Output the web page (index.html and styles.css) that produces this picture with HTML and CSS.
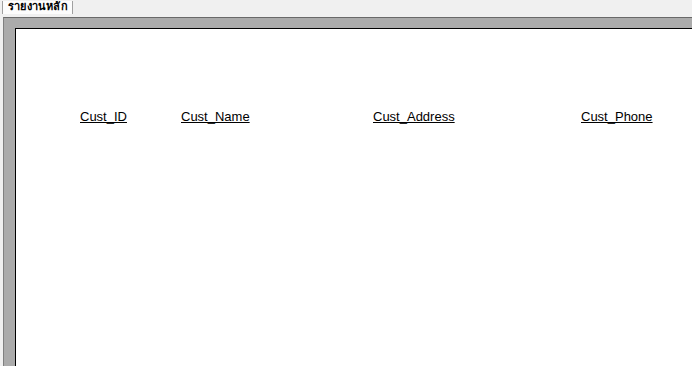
FILE: index.html
```html
<!DOCTYPE html>
<html lang="th">
<head>
    <meta charset="UTF-8">
    <title>รายงานหลัก</title>
    <link rel="stylesheet" href="styles.css">
</head>
<body>
    <div class="tabbar">
        <div class="tab">รายงานหลัก</div>
    </div>

    <div class="workspace">
        <div class="page">
            <div class="header-row">
                <span class="col col-id">Cust_ID</span>
                <span class="col col-name">Cust_Name</span>
                <span class="col col-address">Cust_Address</span>
                <span class="col col-phone">Cust_Phone</span>
            </div>
        </div>
    </div>
</body>
</html>
```

FILE: styles.css
```css
* {
    box-sizing: border-box;
}
html, body {
    margin: 0;
    height: 100%;
    overflow: hidden;
}
body {
    display: flex;
    flex-direction: column;
    background: #f0f0f0;
}
.tabbar {
    height: 17px;
    flex: none;
    padding-left: 2px;
    background: #f0f0f0;
}
.tab {
    display: inline-block;
    height: 13px;
    padding: 0 4px 0 5px;
    border-left: 1px solid #a0a0a0;
    border-right: 1px solid #a0a0a0;
    background: #fcfcfc;
    font-family: Tahoma, "DejaVu Sans", sans-serif;
    font-size: 11px;
    font-weight: bold;
    line-height: 11px;
    letter-spacing: 0.2px;
    color: #000;
    overflow: hidden;
}
.workspace {
    flex: 1;
    display: flex;
    flex-direction: column;
    margin-left: 3px;
    padding: 10px 0 0 11px;
    border-top: 1px solid #696969;
    border-left: 1px solid #808080;
    background: #ababab;
}
.page {
    flex: 1;
    padding-top: 80px;
    border-top: 1px solid #000;
    border-left: 1px solid #000;
    background: #fff;
}
.header-row {
    display: flex;
    font-family: "Liberation Sans", Arial, sans-serif;
    font-size: 13px;
    line-height: 15px;
    color: #000;
}
.col {
    text-decoration: underline;
}
.col-id {
    margin-left: 64px;
    width: 101px;
}
.col-name {
    width: 192px;
}
.col-address {
    width: 208px;
}
```
